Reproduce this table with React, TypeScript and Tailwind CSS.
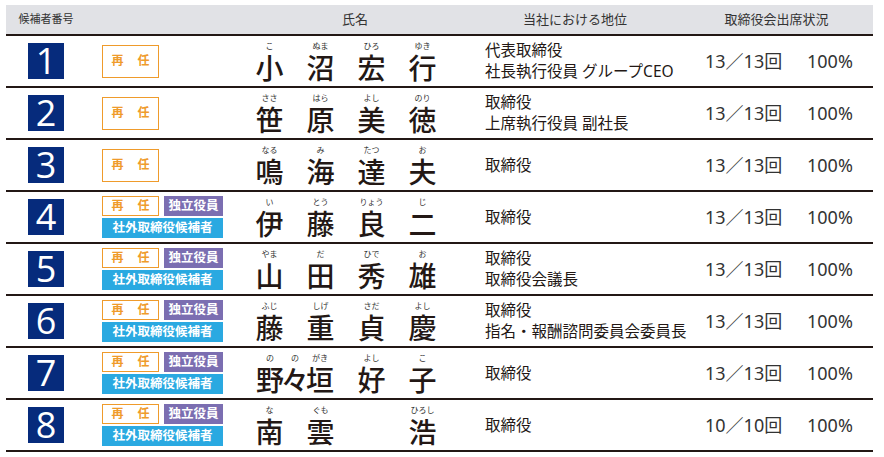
type Slot = { kanji: string; ruby: string }[];

type Candidate = {
  no: number;
  independent: boolean;
  name: Slot[]; // 4 name slots, a slot may hold more than one kanji
  wide?: boolean; // first two slots merged (野々垣)
  position: string[];
  attendance: string;
};

const candidates: Candidate[] = [
  {
    no: 1,
    independent: false,
    name: [[{ kanji: "小", ruby: "こ" }], [{ kanji: "沼", ruby: "ぬま" }], [{ kanji: "宏", ruby: "ひろ" }], [{ kanji: "行", ruby: "ゆき" }]],
    position: ["代表取締役", "社長執行役員 グループCEO"],
    attendance: "13／13回",
  },
  {
    no: 2,
    independent: false,
    name: [[{ kanji: "笹", ruby: "ささ" }], [{ kanji: "原", ruby: "はら" }], [{ kanji: "美", ruby: "よし" }], [{ kanji: "徳", ruby: "のり" }]],
    position: ["取締役", "上席執行役員 副社長"],
    attendance: "13／13回",
  },
  {
    no: 3,
    independent: false,
    name: [[{ kanji: "鳴", ruby: "なる" }], [{ kanji: "海", ruby: "み" }], [{ kanji: "達", ruby: "たつ" }], [{ kanji: "夫", ruby: "お" }]],
    position: ["取締役"],
    attendance: "13／13回",
  },
  {
    no: 4,
    independent: true,
    name: [[{ kanji: "伊", ruby: "い" }], [{ kanji: "藤", ruby: "とう" }], [{ kanji: "良", ruby: "りょう" }], [{ kanji: "二", ruby: "じ" }]],
    position: ["取締役"],
    attendance: "13／13回",
  },
  {
    no: 5,
    independent: true,
    name: [[{ kanji: "山", ruby: "やま" }], [{ kanji: "田", ruby: "だ" }], [{ kanji: "秀", ruby: "ひで" }], [{ kanji: "雄", ruby: "お" }]],
    position: ["取締役", "取締役会議長"],
    attendance: "13／13回",
  },
  {
    no: 6,
    independent: true,
    name: [[{ kanji: "藤", ruby: "ふじ" }], [{ kanji: "重", ruby: "しげ" }], [{ kanji: "貞", ruby: "さだ" }], [{ kanji: "慶", ruby: "よし" }]],
    position: ["取締役", "指名・報酬諮問委員会委員長"],
    attendance: "13／13回",
  },
  {
    no: 7,
    independent: true,
    wide: true,
    name: [
      [
        { kanji: "野", ruby: "の" },
        { kanji: "々", ruby: "の" },
        { kanji: "垣", ruby: "がき" },
      ],
      [{ kanji: "好", ruby: "よし" }],
      [{ kanji: "子", ruby: "こ" }],
    ],
    position: ["取締役"],
    attendance: "13／13回",
  },
  {
    no: 8,
    independent: true,
    name: [[{ kanji: "南", ruby: "な" }], [{ kanji: "雲", ruby: "ぐも" }], [], [{ kanji: "浩", ruby: "ひろし" }]],
    position: ["取締役"],
    attendance: "10／10回",
  },
];

const jp = "font-['Noto_Sans','Noto_Sans_CJK_JP',sans-serif]";

function Sainin({ big }: { big: boolean }) {
  return (
    <div
      className={`flex items-center justify-center gap-[14px] border-[1.5px] border-[#ef9b2b] bg-white text-[12px] font-bold text-[#ef9b2b] w-[57px] ${
        big ? "h-[33px]" : "h-[20px]"
      }`}
    >
      <span>再</span>
      <span>任</span>
    </div>
  );
}

function Badges({ independent }: { independent: boolean }) {
  if (!independent) return <Sainin big />;
  return (
    <div className="flex flex-col gap-[2px] w-[121px]">
      <div className="flex items-center gap-[5px]">
        <Sainin big={false} />
        <div className="flex h-[20px] w-[59px] items-center justify-center bg-[#7b6eb1] text-[12.5px] font-bold text-white">
          独立役員
        </div>
      </div>
      <div className="flex h-[20px] w-[121px] items-center justify-center bg-[#2aa9e1] text-[12.5px] font-bold text-white">
        社外取締役候補者
      </div>
    </div>
  );
}

function NameChar({ kanji, ruby, w }: { kanji: string; ruby: string; w: string }) {
  return (
    <div className={`flex flex-col items-center ${w}`}>
      <div className="h-[10px] whitespace-nowrap text-[8px] leading-[10px] text-[#333]">{ruby}</div>
      <div className="mt-[3px] h-[28px] whitespace-nowrap text-[28px] font-medium leading-[28px] text-[#231815]">{kanji}</div>
    </div>
  );
}

function Name({ c }: { c: Candidate }) {
  return (
    <div className="flex items-center pl-[4px]">
      {c.name.map((slot, i) => {
        const merged = c.wide && i === 0;
        if (slot.length === 0) return <div key={i} className="w-[51px]" />;
        return (
          <div key={i} className={`flex justify-center ${merged ? "w-[102px]" : "w-[51px]"}`}>
            {slot.map((ch, j) => (
              <NameChar key={j} kanji={ch.kanji} ruby={ch.ruby} w={merged ? "w-[25px]" : "w-[51px]"} />
            ))}
          </div>
        );
      })}
    </div>
  );
}

export default function App() {
  return (
    <div className={`w-[884px] h-[457px] bg-white pt-[5px] pl-[6px] ${jp}`}>
      <div className="w-[867px]">
        {/* Header */}
        <div className="grid h-[31px] grid-cols-[80px_154px_230px_210px_193px] items-center border-b-2 border-[#231815] bg-[#e1e2e6] text-[#333]">
          <div className="text-center text-[11px]">候補者番号</div>
          <div />
          <div className="text-center text-[13px]">氏名</div>
          <div className="text-center text-[13px]">当社における地位</div>
          <div className="text-center text-[13px]">取締役会出席状況</div>
        </div>

        {/* Rows */}
        {candidates.map((c) => (
          <div
            key={c.no}
            className="grid h-[52px] grid-cols-[80px_154px_230px_210px_193px] items-center border-b-2 border-[#231815]"
          >
            <div className="flex justify-center">
              <div className="flex h-[36px] w-[36px] items-center justify-center bg-[#062b7c] font-['Open_Sans',sans-serif] text-[36px] leading-none text-white">
                {c.no}
              </div>
            </div>
            <div className="flex pl-[16px]">
              <Badges independent={c.independent} />
            </div>
            <Name c={c} />
            <div className="flex flex-col pl-[15px] text-[15.5px] leading-[21px] text-[#231815]">
              {c.position.map((p) => (
                <span key={p} className="whitespace-nowrap">
                  {p}
                </span>
              ))}
            </div>
            <div className="flex items-center pl-[25px] text-[18px] text-[#333]">
              <span className="w-[102px] whitespace-nowrap">{c.attendance}</span>
              <span>100%</span>
            </div>
          </div>
        ))}
      </div>
    </div>
  );
}
